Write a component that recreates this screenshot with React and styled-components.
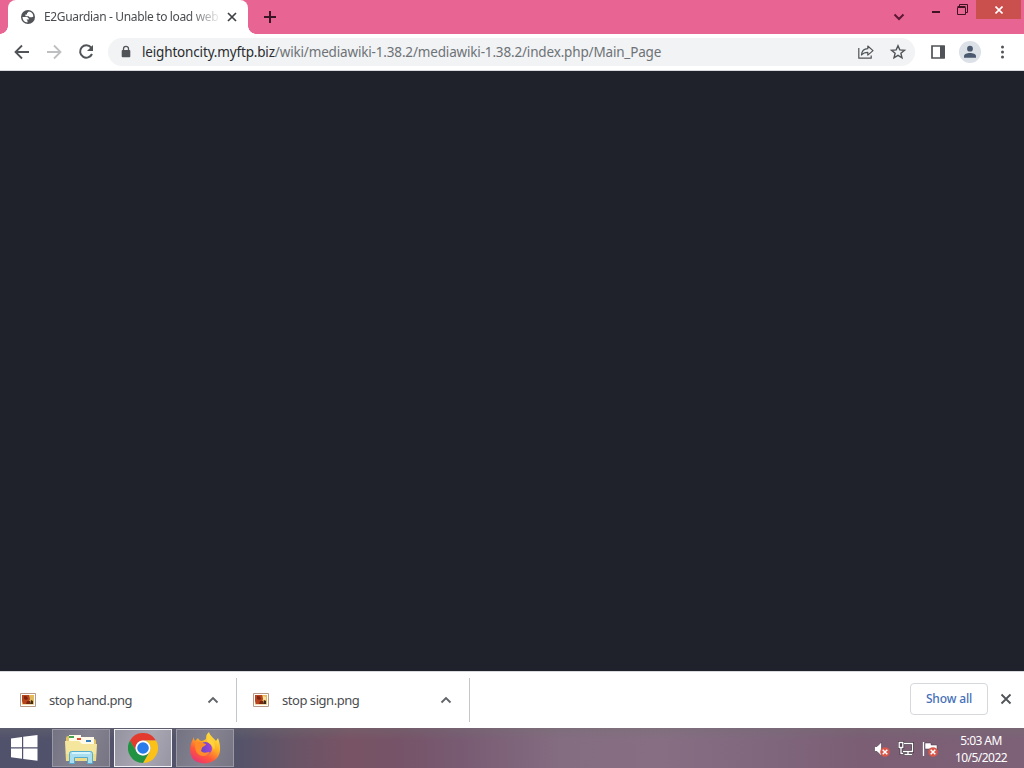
import React from "react";
import styled, { createGlobalStyle } from "styled-components";

const Global = createGlobalStyle`
  * { box-sizing: border-box; }
  body { margin: 0; overflow: hidden; background: #1f212b; }
  svg { display: block; flex: none; }
`;

const Desktop = styled.div`
  width: 1024px;
  height: 768px;
  display: flex;
  flex-direction: column;
  font-family: "Noto Sans", "Open Sans", sans-serif;
  overflow: hidden;
`;

const TitleBar = styled.header`
  height: 34px;
  flex: none;
  display: flex;
  background: #e86492;
`;

const TabShape = styled.div`
  position: relative;
  width: 240px;
  height: 34px;
  margin-left: 8px;
  padding: 0 10px 0 13px;
  display: flex;
  align-items: center;
  background: #fff;
  border-radius: 8px 8px 0 0;
  &::before, &::after {
    content: "";
    position: absolute;
    bottom: 0;
    width: 8px;
    height: 8px;
  }
  &::before { left: -8px; background: radial-gradient(circle at 0 0, transparent 7.5px, #fff 8px); }
  &::after { right: -8px; background: radial-gradient(circle at 100% 0, transparent 7.5px, #fff 8px); }
`;

const TabTitle = styled.span`
  width: 174px;
  margin: 0 8px 0 9px;
  white-space: nowrap;
  font-size: 12px;
  line-height: 18px;
  letter-spacing: -0.35px;
  color: #4a4c50;
  mask-image: linear-gradient(90deg, #000 145px, transparent 178px);
`;

const NewTab = styled.button`
  width: 28px;
  height: 34px;
  margin-left: 8px;
  padding: 0;
  border: 0;
  background: none;
  display: flex;
  align-items: center;
  justify-content: center;
`;

const WindowControls = styled.div`
  margin-left: auto;
  display: flex;
`;

const Control = styled.button`
  width: ${(p) => p.$w}px;
  height: ${(p) => p.$h || 20}px;
  padding: 0;
  border: 0;
  display: flex;
  align-items: center;
  justify-content: center;
  background: ${(p) => (p.$danger ? "#c9504d" : "none")};
  margin: ${(p) => p.$m || "0"};
`;

const Toolbar = styled.nav`
  height: 37px;
  flex: none;
  display: flex;
  align-items: center;
  padding: 0 13px;
  background: #fff;
  border-bottom: 1px solid #d8d9dc;
`;

const NavButtons = styled.div`
  display: flex;
  gap: 14px;
`;

const AddressBar = styled.div`
  height: 28px;
  width: 807px;
  margin-left: 13px;
  padding: 0 8px 0 10px;
  border-radius: 14px;
  background: #f1f3f4;
  display: flex;
  align-items: center;
`;

const Url = styled.span`
  margin-left: 8px;
  flex: 1;
  white-space: nowrap;
  font-size: 13.5px;
  line-height: 20px;
  letter-spacing: ${(p) => p.$track}px;
  color: #6e7277;
`;

const Domain = styled.span`
  color: #2b2c2f;
`;

const Actions = styled.div`
  display: flex;
  align-items: center;
  gap: 14px;
`;

const ToolActions = styled.div`
  display: flex;
  align-items: center;
  margin-left: 14px;
  gap: 12px;
`;

const Page = styled.main`
  flex: 1;
  background: #1f212b;
`;

const DownloadShelf = styled.section`
  height: 57px;
  flex: none;
  display: flex;
  align-items: center;
  padding-bottom: 1px;
  background: #fff;
  border-top: 1px solid #d8d9dc;
`;

const Download = styled.div`
  width: ${(p) => p.$w}px;
  height: 44px;
  padding: 0 17px 0 ${(p) => p.$left}px;
  display: flex;
  align-items: center;
  border-right: 1px solid #c4c6ca;
`;

const FileName = styled.span`
  flex: 1;
  margin-left: 13px;
  white-space: nowrap;
  font-size: 13px;
  line-height: 18px;
  letter-spacing: -0.46px;
  color: #4b4d51;
`;

const ShowAll = styled.button`
  width: 78px;
  height: 32px;
  margin: 0 11px 2px auto;
  padding: 0;
  border: 1px solid #d6d8dc;
  border-radius: 4px;
  background: #fff;
  color: #446fb8;
  font: 500 12px/18px "Noto Sans", "Open Sans", sans-serif;
  letter-spacing: -0.15px;
`;

const CloseShelf = styled.div`
  margin: 0 11px 2px 0;
`;

const Taskbar = styled.footer`
  height: 40px;
  flex: none;
  display: flex;
  align-items: center;
  background:
    linear-gradient(180deg, rgba(112, 112, 112, 0.35), transparent 30%),
    linear-gradient(90deg, #50516b 0, #53536a 235px, #685466 290px, #785365 350px, #765368 400px, #785b72 460px, #846c81 560px, #876e83 660px, #80677e 760px, #7b5e74 860px, #7d6177 1024px);
`;

const Start = styled.div`
  width: 52px;
  padding-left: 11px;
`;

const Task = styled.div`
  width: 58px;
  height: 38px;
  margin-right: 4px;
  display: flex;
  align-items: center;
  justify-content: center;
  border: 1px solid ${(p) => (p.$active ? "#f1f0f4" : "#9a98a5")};
  background: ${(p) => (p.$active ? "linear-gradient(110deg, #93929f, #aaa8b3 55%, #9795a2)" : "linear-gradient(110deg, #747383, #858390 55%, #777483)")};
`;

const Tray = styled.div`
  margin-left: auto;
  display: flex;
  align-items: center;
  gap: 8px;
  padding-top: 2px;
`;

const Clock = styled.div`
  width: 60px;
  margin: 0 13px 0 5px;
  text-align: center;
  white-space: nowrap;
  font-size: 12px;
  line-height: 17px;
  letter-spacing: -0.55px;
  color: #fff;
`;

const Globe = () => (
  <svg width="14" height="14" viewBox="0 0 14 14">
    <circle cx="7" cy="7" r="7" fill="#505357" />
    <path d="M7.8 1.5 6 3.2v1.4H4.4v1.6h3.2l1.1 1.1H11l1.4-.9A5.6 5.6 0 0 0 7.8 1.5ZM1.5 7.2a5.5 5.5 0 0 0 5 5.2v-1.7l-1-1.1h2.3V8.4L6.2 7H1.5Z" fill="#fff" />
  </svg>
);

const Stroke = ({ w = 18, h = w, d, color = "#505357", sw = 2, join = "miter" }) => (
  <svg width={w} height={h} viewBox={`0 0 ${w} ${h}`} fill="none" stroke={color} strokeWidth={sw} strokeLinejoin={join}>
    <path d={d} />
  </svg>
);

const Thumb = ({ sign }) => (
  <svg width="16" height="14" viewBox="0 0 16 14">
    <path fill="#fff" stroke="#b89a88" d="M.5.5h15v13H.5z" />
    <path fill="#e8b85a" d="M2 2h12v9.5H2z" />
    <path fill="#b8441d" d="M2 2h7l1 4-2 5H3L2 8z" />
    <path fill="#7d2411" d="m4 3 3 .5L8 6 6 7 4 6zM7 8h3v3H6z" />
    <path fill={sign ? "#f8dfa0" : "#d8bb65"} d="m10 3 3 1v3h-3z" />
    <path fill="#3a2d1c" d="m11 7 2 1v3h-3z" />
  </svg>
);

const WindowsLogo = () => (
  <svg width="27" height="26" viewBox="0 0 27 26" fill="#fff">
    <path d="M0 3.6 11 2v10.3H0zM12.2 1.8 26.5 0v12.3H12.2zM0 13.5h11v10.3L0 22.2zM12.2 13.5h14.3v12.2L12.2 24z" />
  </svg>
);

const Folder = () => (
  <svg width="32" height="32" viewBox="0 0 32 32">
    <path fill="#e2c665" d="M1 6q0-2 2-2h9l2 3h15q2 0 2 2v20H1z" />
    <path fill="#fffbe8" d="M4 3h12v7H4zM15 5h14v7H15z" />
    <path fill="#43a351" d="M4 4h5v2H4z" />
    <path fill="#d84a33" d="M12 6h4v2h-4z" />
    <path fill="#397ebc" d="M21 8h5v2h-5z" />
    <path fill="#f5e69e" d="M0 9h14l3 3h15l-1 17H1z" />
    <path fill="#e9d37a" d="M1 22h30v7H1z" opacity=".6" />
    <path fill="#a9ddf0" stroke="#55abd0" d="M4.5 21.5q0-2 2-2h19q2 0 2 2v10h-5v-6h-13v6h-5z" />
    <path stroke="#e5fbff" strokeWidth="1.5" d="M7 21h18" />
  </svg>
);

const Chrome = () => (
  <svg width="30" height="30" viewBox="0 0 48 48">
    <path fill="#e33b2e" d="M3.2 12A24 24 0 0 1 44.8 12H24a12 12 0 0 0-10.4 18Z" />
    <path fill="#fbc116" d="M44.8 12A24 24 0 0 1 24 48l10.4-18A12 12 0 0 0 24 12Z" />
    <path fill="#229342" d="M24 48A24 24 0 0 1 3.2 12l10.4 18a12 12 0 0 0 20.8 0Z" />
    <circle cx="24" cy="24" r="12" fill="#fff" />
    <circle cx="24" cy="24" r="9.3" fill="#277bea" />
  </svg>
);

const Firefox = () => (
  <svg width="31" height="32" viewBox="0 0 31 32">
    <defs>
      <linearGradient id="flame" x1=".8" y1="0" x2=".2" y2="1">
        <stop offset="0" stopColor="#fff044" />
        <stop offset=".4" stopColor="#ffab24" />
        <stop offset=".7" stopColor="#ff563c" />
        <stop offset="1" stopColor="#e9317b" />
      </linearGradient>
      <linearGradient id="violet" x1="0" x2="1">
        <stop stopColor="#5947c5" />
        <stop offset="1" stopColor="#a645d4" />
      </linearGradient>
    </defs>
    <path fill="url(#flame)" d="M4 5c0 2 .3 3 1 4l3-3c1 2 2 3 4 3 2-1 3-1 4-2 0-4 1-5 3-7 1 4 5 6 7 9l2-3c3 8 3 15-1 20-6 7-18 7-24 1C-1 21-1 14 4 5Z" />
    <circle cx="15.5" cy="16.5" r="6.5" fill="url(#violet)" />
    <path fill="#ff8b29" d="M5 10c4-1 6 0 8 1l3 1c0 2-3 2-4 4l-1 3c3 3 6 1 9 1-2 4-9 6-13 1-2-3-2-6-2-11Z" />
    <path fill="#ffd33c" d="M18 4c6 4 8 9 6 14-1-3-2-5-5-7-2-1-3-3-1-7Z" />
  </svg>
);

const ErrorBadge = ({ x, y }) => (
  <g transform={`translate(${x} ${y})`}>
    <circle r="4.8" fill="#d8574b" />
    <path d="m-2.3-2.3 4.6 4.6m0-4.6-4.6 4.6" stroke="#fff" strokeWidth="1.5" />
  </g>
);

export default function App() {
  return (
    <Desktop>
      <Global />
      <TitleBar>
        <TabShape>
          <Globe />
          <TabTitle>E2Guardian - Unable to load web</TabTitle>
          <Stroke w={12} d="m2 2 8 8M10 2l-8 8" color="#3e4043" sw={1.7} />
        </TabShape>
        <NewTab><Stroke w={12} d="M6 0v12M0 6h12" color="#391525" sw={2} /></NewTab>
        <WindowControls>
          <Control $w={20} $m="7px 14px 0 0"><Stroke w={12} h={8} d="m1.5 1.5 4.5 4.5 4.5-4.5" color="#5b1836" sw={2} /></Control>
          <Control $w={26}><Stroke w={8} h={8} d="M0 6h8" color="#401323" sw={2} /></Control>
          <Control $w={27} $h={18}>
            <svg width="11" height="11" viewBox="0 0 11 11" fill="none" stroke="#401323">
              <path d="M2.5 2.5v-2h8v8h-2M.5 3.5h8v7h-8zM.5 2.5h8" />
            </svg>
          </Control>
          <Control $w={45} $h={19} $danger $m="0 3px 0 0"><Stroke w={8} d="m.5.5 7 7m0-7-7 7" color="#fff" sw={1.6} /></Control>
        </WindowControls>
      </TitleBar>
      <Toolbar>
        <NavButtons>
          <Stroke d="M16 9H3M9 2.5 2.5 9 9 15.5" sw={1.8} />
          <Stroke d="M2 9h13M9 2.5 15.5 9 9 15.5" color="#bdbfc1" sw={1.8} />
          <svg width="18" height="18" viewBox="0 0 18 18">
            <path d="M14.1 4.5A6.2 6.2 0 1 0 15 11" fill="none" stroke="#505357" strokeWidth="2" />
            <path d="M16 2v6h-6z" fill="#505357" />
          </svg>
        </NavButtons>
        <AddressBar>
          <svg width="16" height="16" viewBox="0 0 16 16">
            <path d="M5.5 7V4.8a2.5 2.5 0 0 1 5 0V7" fill="none" stroke="#505357" strokeWidth="1.3" />
            <rect x="3.7" y="6" width="8.6" height="7.3" rx="1" fill="#505357" />
          </svg>
          <Url $track={-0.165}><Domain>leightoncity.myftp.biz</Domain>/wiki/mediawiki-1.38.2/mediawiki-1.38.2/index.php/Main_Page</Url>
          <Actions>
            <Stroke w={18} d="M1.8 5v10.2h12.4v-2.7M4.5 12c.3-4.3 2.8-6.2 6.3-6.3V3l5.2 4.6-5.2 4.5V9.3C8 9.3 6 10.1 4.5 12Z" sw={1.2} join="round" />
            <Stroke w={18} d="m9 2.7 1.8 4.2 4.7.4-3.6 3 1.1 4.5L9 12.4l-4 2.4 1.1-4.5-3.6-3 4.7-.4Z" sw={1.4} />
          </Actions>
        </AddressBar>
        <ToolActions>
          <svg width="18" height="18" viewBox="0 0 18 18">
            <path d="M3 3h12v12H3z" fill="#fff" stroke="#505357" strokeWidth="1.7" />
            <path d="M11 3h5v12h-5z" fill="#505357" />
          </svg>
          <svg width="22" height="22" viewBox="0 0 22 22">
            <circle cx="11" cy="11" r="11" fill="#dce0e7" />
            <circle cx="11" cy="7.7" r="2.9" fill="#4a596d" />
            <path d="M5 16.8v-1.6c0-4.2 12-4.2 12 0v1.6Z" fill="#4a596d" />
          </svg>
          <svg width="18" height="18" viewBox="0 0 18 18" fill="#505357">
            <circle cx="9.5" cy="4" r="1.5" /><circle cx="9.5" cy="9" r="1.5" /><circle cx="9.5" cy="14" r="1.5" />
          </svg>
        </ToolActions>
      </Toolbar>
      <Page />
      <DownloadShelf>
        <Download $w={237} $left={20}>
          <Thumb /><FileName>stop hand.png</FileName><Stroke w={12} d="m1.5 8.5 4.5-4.5 4.5 4.5" color="#606367" sw={1.8} />
        </Download>
        <Download $w={233} $left={16}>
          <Thumb sign /><FileName>stop sign.png</FileName><Stroke w={12} d="m1.5 8.5 4.5-4.5 4.5 4.5" color="#606367" sw={1.8} />
        </Download>
        <ShowAll>Show all</ShowAll>
        <CloseShelf><Stroke w={14} d="m2.5 2.5 9 9m0-9-9 9" sw={1.8} /></CloseShelf>
      </DownloadShelf>
      <Taskbar>
        <Start><WindowsLogo /></Start>
        <Task><Folder /></Task>
        <Task $active><Chrome /></Task>
        <Task><Firefox /></Task>
        <Tray>
          <svg width="16" height="16" viewBox="0 0 16 16">
            <path d="M.5 5.5H3L7.5 1v14L3 10.5H.5z" fill="#fff" stroke="#49394a" strokeWidth=".6" />
            <ErrorBadge x={11} y={11} />
          </svg>
          <svg width="16" height="16" viewBox="0 0 16 16" fill="none">
            <path d="M6 2.5h8.5v8H5M10 10.5v3M6.5 13.5h7.5M3 6.5v6h2M1.2 1.5h3.6v5H1.2z" stroke="#41333f" strokeWidth="2.8" />
            <path d="M6 2.5h8.5v8H5M10 10.5v3M6.5 13.5h7.5M3 6.5v6h2M1.2 1.5h3.6v5H1.2z" stroke="#fff" strokeWidth="1.3" />
          </svg>
          <svg width="16" height="16" viewBox="0 0 16 16">
            <path d="M1.5 1v14" stroke="#fff" strokeWidth="1.3" />
            <path d="M3 2h6v2h6v5H9V8H3z" fill="#fff" stroke="#49394a" strokeWidth=".5" />
            <ErrorBadge x={11} y={11} />
          </svg>
          <Clock>5:03 AM<br />10/5/2022</Clock>
        </Tray>
      </Taskbar>
    </Desktop>
  );
}
